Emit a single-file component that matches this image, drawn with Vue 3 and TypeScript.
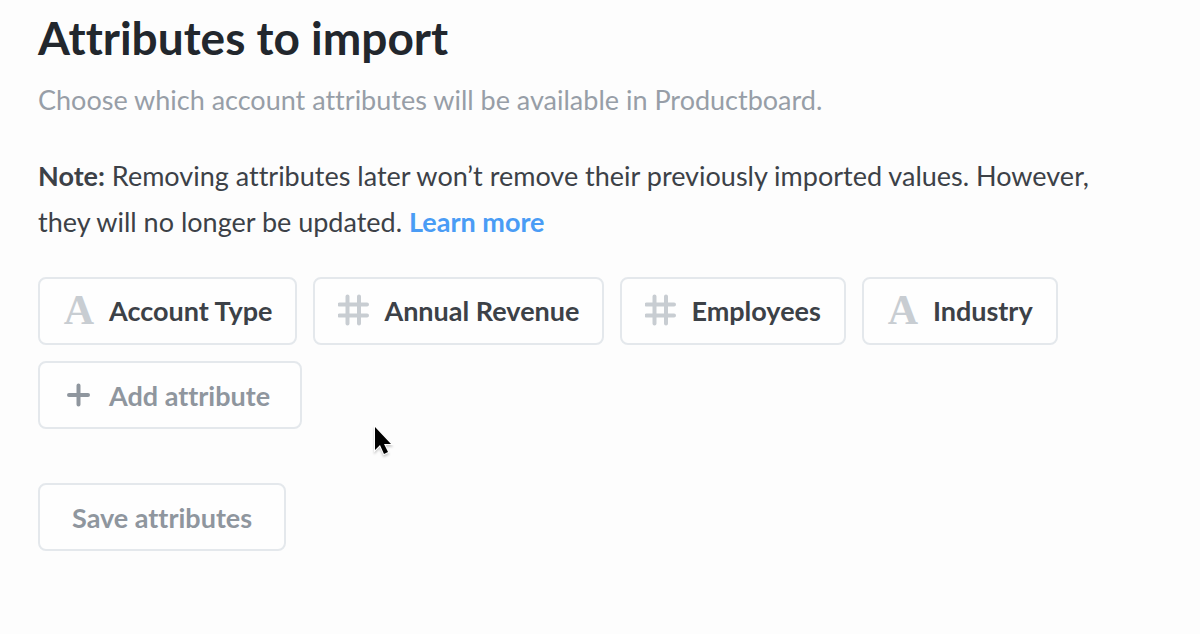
<script setup lang="ts">
import { ref } from 'vue'

type AttributeKind = 'text' | 'number'

interface Attribute {
  name: string
  kind: AttributeKind
}

const attributes = ref<Attribute[]>([
  { name: 'Account Type', kind: 'text' },
  { name: 'Annual Revenue', kind: 'number' },
  { name: 'Employees', kind: 'number' },
  { name: 'Industry', kind: 'text' },
])
</script>

<template>
  <main class="panel">
    <h1 class="title">Attributes to import</h1>
    <p class="subtitle">Choose which account attributes will be available in Productboard.</p>
    <p class="note">
      <strong>Note:</strong> Removing attributes later won’t remove their previously imported values. However,
      they will no longer be updated. <a class="link" href="#">Learn more</a>
    </p>

    <div class="chips">
      <button v-for="item in attributes" :key="item.name" type="button" class="chip">
        <span v-if="item.kind === 'text'" class="icon letter" aria-hidden="true">A</span>
        <svg v-else class="icon" viewBox="0 0 32 32" aria-hidden="true">
          <path d="M9.5 2.5v27M21 2.5v27M1.5 10.5h27.5M1.5 21.5h27.5" fill="none" stroke="#c8cdd2" stroke-width="4" stroke-linecap="round" />
        </svg>
        {{ item.name }}
      </button>
      <button type="button" class="chip muted add">
        <svg class="icon" viewBox="0 0 32 32" aria-hidden="true">
          <path d="M15.5 6.5v19M6 16h19" fill="none" stroke="#8f969e" stroke-width="4" stroke-linecap="round" />
        </svg>
        Add attribute
      </button>
    </div>

    <button type="button" class="chip muted save">Save attributes</button>

    <svg class="pointer" viewBox="0 0 24 32" aria-hidden="true">
      <path d="M3 2v23l5-5 4 9 4-2-4-8h7z" fill="#000" stroke="#fff" stroke-width="2" paint-order="stroke" />
    </svg>
  </main>
</template>

<style scoped>
.panel {
  position: relative;
  box-sizing: border-box;
  min-height: 100vh;
  padding: 10px 38px 24px;
  font-family: Lato, "Open Sans", sans-serif;
  font-size: 27px;
  font-variant-ligatures: none;
  color: #3c4147;
}

.title {
  margin: 0;
  font-size: 46px;
  line-height: 56px;
  font-weight: 700;
  color: #22272d;
}

.subtitle {
  margin: 18px 0 0;
  line-height: 32px;
  color: #979ea7;
}

.note {
  max-width: 1060px;
  margin: 37px 0 0;
  line-height: 46px;
}

.link {
  font-weight: 700;
  color: #4a9cf5;
  text-decoration: none;
}

.chips {
  display: flex;
  flex-wrap: wrap;
  gap: 16px;
  margin-top: 32px;
}

.chip {
  display: flex;
  align-items: center;
  gap: 14px;
  box-sizing: border-box;
  height: 68px;
  padding: 0 23px 2px;
  border: 2px solid #e4e8ec;
  border-radius: 8px;
  background: #fefefe;
  font-family: inherit;
  font-size: 27px;
  font-variant-ligatures: none;
  font-weight: 700;
  color: #3c4147;
  cursor: pointer;
}

.icon {
  flex: none;
  width: 32px;
  height: 32px;
}

.letter {
  font-family: "Liberation Serif", serif;
  font-size: 42px;
  line-height: 32px;
  font-weight: 700;
  text-align: center;
  color: #c8cdd2;
}

.muted {
  color: #8f969e;
}

.add {
  padding: 0 30px 0 23px;
}

.save {
  margin-top: 54px;
  padding: 0 32px;
}

.pointer {
  position: absolute;
  left: 372px;
  top: 425px;
  width: 24px;
  height: 32px;
  filter: drop-shadow(0 2px 1px rgba(0, 0, 0, 0.2));
  pointer-events: none;
}
</style>

<style>
body {
  background: #fdfdfd;
}
</style>
